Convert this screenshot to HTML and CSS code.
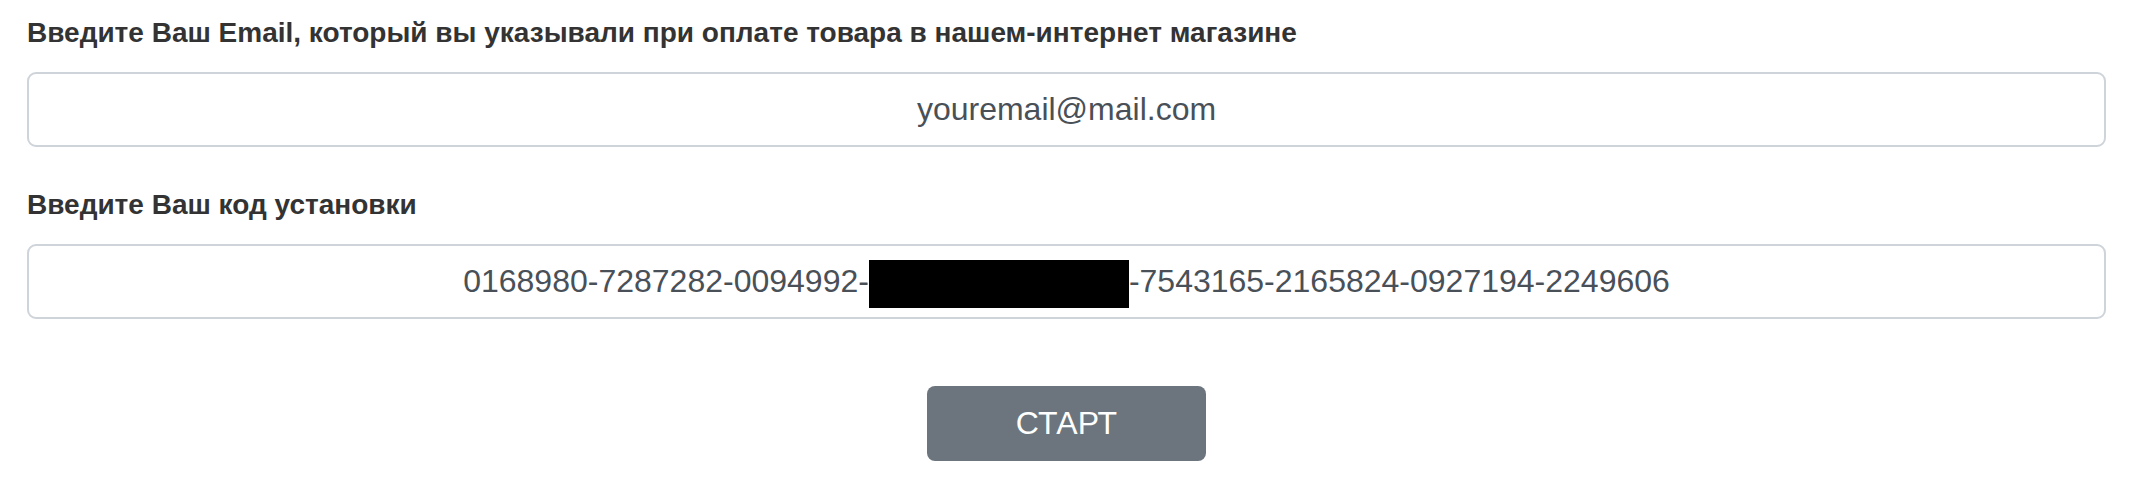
FILE: index.html
```html
<!DOCTYPE html>
<html>
    <head>
        <title>Активация</title>

        <link rel="stylesheet" href="styles.css">
    </head>

    <body>
        <form class="activate-form" onsubmit="return false;">
            <div class="form-group">
                <label class="form-label" for="email">Введите Ваш Email, который вы указывали при оплате товара в нашем-интернет магазине</label>
                <input class="form-control" id="email" type="text" value="youremail@mail.com">
            </div>

            <div class="form-group">
                <label class="form-label">Введите Ваш код установки</label>
                <div class="form-control code-field">
                    <span>0168980-7287282-0094992-</span><span class="redacted"></span><span>-7543165-2165824-0927194-2249606</span>
                </div>
            </div>

            <div class="btn-row">
                <button class="start-btn" type="submit">СТАРТ</button>
            </div>
        </form>
    </body>
</html>
```

FILE: styles.css
```css
body {
    margin: 0;
    font-family: "Liberation Sans", Arial, sans-serif;
    color: rgb(51, 51, 51);
    background-color: white;
}

.activate-form {
    padding: 15px 48px 0 27px;
}

.form-group {
    display: flex;
    flex-direction: column;
    gap: 21px;
    margin-bottom: 40px;
}

.form-label {
    font-size: 28px;
    font-weight: bold;
    line-height: 36px;
}

.form-control {
    box-sizing: border-box;
    width: 100%;
    height: 75px;
    padding: 0 24px;

    font-family: "Liberation Sans", Arial, sans-serif;
    font-size: 32px;
    color: rgb(73, 80, 87);
    text-align: center;

    border: 2px solid rgb(206, 212, 218);
    border-radius: 9px;
    background-color: white;
    outline: none;
}

.code-field {
    display: flex;
    align-items: center;
    justify-content: center;
}

.redacted {
    display: inline-block;
    width: 260px;
    height: 48px;
    margin-top: 5px;
    background-color: black;
}

.btn-row {
    display: flex;
    justify-content: center;
    padding-top: 27px;
}

.start-btn {
    width: 279px;
    height: 75px;

    font-family: "Liberation Sans", Arial, sans-serif;
    font-size: 32px;
    color: white;

    border: none;
    border-radius: 8px;
    background-color: rgb(108, 117, 125);
}
```
